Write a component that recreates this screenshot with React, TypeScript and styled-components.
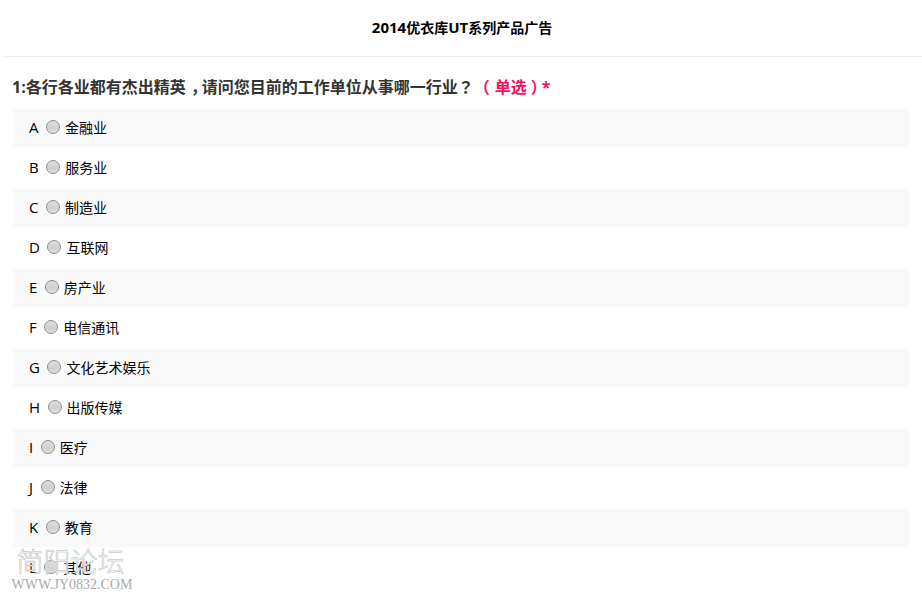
import React from "react";
import styled, { createGlobalStyle } from "styled-components";

const Global = createGlobalStyle`
  html, body { margin: 0; padding: 0; background: #fff; }
  body { font-family: "Open Sans", "Noto Sans CJK SC", sans-serif; overflow: hidden; }
`;
const Page = styled.div`
  position: relative;
  width: 922px;
  height: 605px;
  overflow: hidden;
`;
const Header = styled.header`
  margin-left: 2px;
  height: 56px;
  border-bottom: 1px solid #eee;
  display: flex;
  align-items: center;
  justify-content: center;
`;
const Title = styled.h1`
  margin: 0 0 2px;
  font-size: 14px;
  font-weight: 700;
  color: #000;
`;
const Latin = styled.span`
  font-size: 15px;
`;
const Question = styled.h2`
  margin: 0;
  padding: 18px 0 0 12px;
  height: 34px;
  line-height: 22px;
  font-size: 16px;
  font-weight: 700;
  color: #333;
`;
const Comma = styled.span`
  margin-left: 5px;
  margin-right: -5px;
`;
const Punct = styled.span`
  font-family: "Noto Sans CJK TC", sans-serif;
`;
const Kind = styled.span`
  color: #f5105f;
`;
const OpenParen = styled.span`
  margin-right: 5px;
`;
const CloseParen = styled.span`
  margin-left: 4px;
  margin-right: -5px;
`;
const List = styled.div`
  margin: 0 12px 0 14px;
  display: flex;
  flex-direction: column;
  gap: 2px;
`;
const Row = styled.label<{ $odd: boolean }>`
  height: 38px;
  box-sizing: border-box;
  display: flex;
  align-items: center;
  padding: 0 0 2px 15px;
  background: ${(p) => (p.$odd ? "#f9f9f9" : "#fff")};
  font-size: 14px;
  color: #000;
`;
const Letter = styled.span`
  font-size: 15px;
  margin-right: 7.5px;
`;
const Radio = styled.span`
  width: 14px;
  height: 14px;
  margin-right: 5px;
  border-radius: 50%;
  box-sizing: border-box;
  border: 1px solid #8a8a8a;
  background: linear-gradient(#dcdcdc, #d0d0d0 60%, #dedede);
  box-shadow: inset 0 0 1px #f4f4f4;
`;
const Watermark = styled.div`
  position: absolute;
  left: 8px;
  top: 545px;
  width: 125px;
  text-align: center;
  pointer-events: none;
`;
const MarkTitle = styled.div`
  font-family: "Noto Sans CJK SC", sans-serif;
  font-size: 27px;
  font-weight: 300;
  line-height: 32px;
  color: rgba(255, 255, 255, 0.9);
  -webkit-text-stroke: 0.5px #b5b5b5;
  text-shadow: 0 0 2px #fff;
`;
const MarkUrl = styled.div`
  font-family: "Liberation Serif", serif;
  font-size: 14px;
  line-height: 16px;
  margin-left: 3px;
  color: #aaa;
  white-space: nowrap;
`;

const options: [string, string][] = [
  ["A", "金融业"],
  ["B", "服务业"],
  ["C", "制造业"],
  ["D", "互联网"],
  ["E", "房产业"],
  ["F", "电信通讯"],
  ["G", "文化艺术娱乐"],
  ["H", "出版传媒"],
  ["I", "医疗"],
  ["J", "法律"],
  ["K", "教育"],
  ["L", "其他"],
];

export default function App() {
  return (
    <Page>
      <Global />
      <Header>
        <Title>
          <Latin>2014</Latin>优衣库<Latin>UT</Latin>系列产品广告
        </Title>
      </Header>
      <Question>
        1:各行各业都有杰出精英<Comma>，</Comma>请问您目前的工作单位从事哪一行业<Punct>？</Punct>
        <Kind>
          <OpenParen>（</OpenParen>单选<CloseParen>）</CloseParen>*
        </Kind>
      </Question>
      <List>
        {options.map(([l, t], i) => (
          <Row key={l} $odd={i % 2 === 0}>
            <Letter>{l}</Letter>
            <Radio />
            <span>{t}</span>
          </Row>
        ))}
      </List>
      <Watermark>
        <MarkTitle>简阳论坛</MarkTitle>
        <MarkUrl>WWW.JY0832.COM</MarkUrl>
      </Watermark>
    </Page>
  );
}
